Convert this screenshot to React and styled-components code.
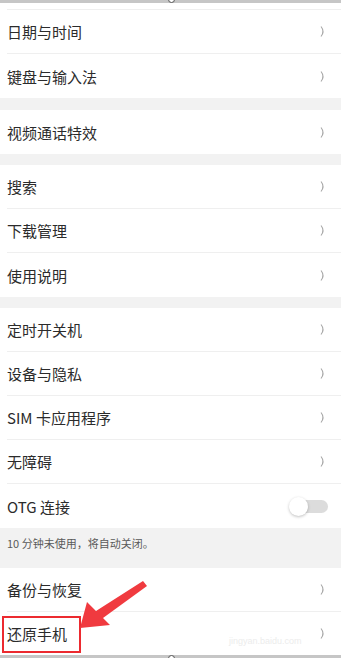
import React from "react";
import styled, { createGlobalStyle } from "styled-components";

const GlobalStyle = createGlobalStyle`
  html, body {
    margin: 0;
    padding: 0;
    background: #f2f2f2;
  }
  body {
    font-family: "Noto Sans CJK SC", "Noto Sans", sans-serif;
  }
`;

const groups = [
  ["日期与时间", "键盘与输入法"],
  ["视频通话特效"],
  ["搜索", "下载管理", "使用说明"],
];

const Chevron = () => (
  <svg width="6" height="11" viewBox="0 0 6 11">
    <path d="M1 0.5 Q5 5.5 1 10.5" fill="none" stroke="#a8a8a8" strokeWidth="1.1" />
  </svg>
);

const App = () => {
  return (
    <>
      <GlobalStyle />
      <Page>
        <EdgeBar />
        <Section>
          <Partial />
          {groups[0].map((t, i) => (
            <Row key={t} last={i === groups[0].length - 1}>
              <Label>{t}</Label>
              <Chevron />
            </Row>
          ))}
        </Section>
        <Gap size={12} />
        <Section>
          {groups[1].map((t) => (
            <Row key={t} last>
              <Label>{t}</Label>
              <Chevron />
            </Row>
          ))}
        </Section>
        <Gap size={11} />
        <Section>
          {groups[2].map((t, i) => (
            <Row key={t} last={i === groups[2].length - 1}>
              <Label>{t}</Label>
              <Chevron />
            </Row>
          ))}
        </Section>
        <Gap size={11} />
        <Section>
          {["定时开关机", "设备与隐私", "SIM 卡应用程序", "无障碍"].map((t) => (
            <Row key={t}>
              <Label>{t}</Label>
              <Chevron />
            </Row>
          ))}
          <Row last>
            <Label>OTG 连接</Label>
            <Switch>
              <Knob />
            </Switch>
          </Row>
        </Section>
        <Note>10 分钟未使用，将自动关闭。</Note>
        <Section>
          <Row>
            <Label>备份与恢复</Label>
            <Chevron />
          </Row>
          <Row last short>
            <Label highlight>还原手机</Label>
            <Watermark>jingyan.baidu.com</Watermark>
            <Chevron />
          </Row>
        </Section>
        <EdgeBar bottom />
        <Arrow width="80" height="60" viewBox="0 0 80 60">
          <polygon points="65,1 69,6 25,38 32,45 2,48 9,22 18,31" fill="#f03a3f" />
        </Arrow>
      </Page>
    </>
  );
};

const Page = styled.div`
  position: relative;
  width: 341px;
  height: 658px;
  overflow: hidden;
  display: flex;
  flex-direction: column;
  background: #f2f2f2;
`;

const EdgeBar = styled.div`
  position: relative;
  height: 3px;
  flex-shrink: 0;
  background: #c6c6c6;

  &::after {
    content: "";
    position: absolute;
    left: 168px;
    top: ${(p) => (p.bottom ? "0" : "-4px")};
    width: 5px;
    height: 5px;
    border-radius: 50%;
    border: 1px solid #555;
    background: #fff;
  }
`;

const Section = styled.div`
  background: #fff;
  display: flex;
  flex-direction: column;
`;

const Partial = styled.div`
  height: 7px;
  margin-left: 7px;
  border-bottom: 1px solid #efefef;
  box-sizing: border-box;
`;

const Row = styled.div`
  position: relative;
  height: ${(p) => (p.short ? 43 : 44)}px;
  box-sizing: border-box;
  margin-left: 7px;
  padding-right: 15px;
  display: flex;
  align-items: center;
  justify-content: space-between;
  border-bottom: ${(p) => (p.last ? "none" : "1px solid #efefef")};
`;

const Label = styled.span`
  position: relative;
  font-size: 15px;
  color: #2b2b2b;

  ${(p) =>
    p.highlight &&
    `
    &::after {
      content: "";
      position: absolute;
      left: -5px;
      right: -14px;
      top: -7px;
      bottom: -9px;
      border: 2.5px solid #ec2a2f;
    }
  `}
`;

const Gap = styled.div`
  height: ${(p) => p.size}px;
  flex-shrink: 0;
  background: #f2f2f2;
`;

const Note = styled.div`
  height: 40px;
  box-sizing: border-box;
  padding: 7px 7px 0;
  font-size: 11px;
  color: #5a5a5a;
  background: #f2f2f2;
`;

const Switch = styled.div`
  position: relative;
  width: 36px;
  height: 13px;
  border-radius: 7px;
  background: #dcdcdc;
  margin-right: -2px;
`;

const Knob = styled.div`
  position: absolute;
  left: -3px;
  top: -3px;
  width: 19px;
  height: 19px;
  border-radius: 50%;
  background: #fff;
  box-shadow: 0 1px 3px rgba(0, 0, 0, 0.25);
`;

const Watermark = styled.span`
  position: absolute;
  left: 222px;
  top: 24px;
  font-family: "Liberation Sans", sans-serif;
  font-size: 9px;
  color: #ececec;
`;

const Arrow = styled.svg`
  position: absolute;
  left: 78px;
  top: 580px;
`;

export default App;
